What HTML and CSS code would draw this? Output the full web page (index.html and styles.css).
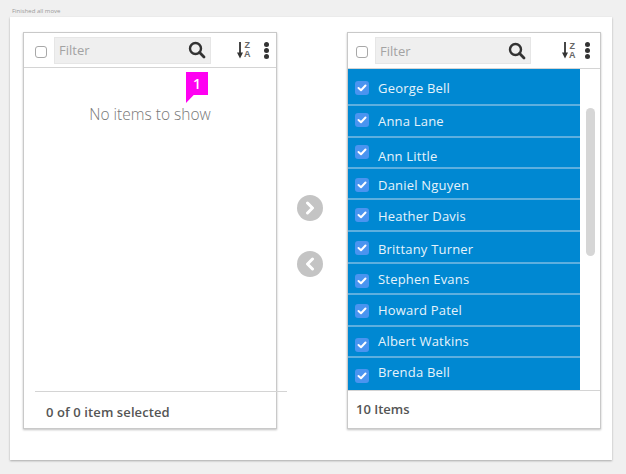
FILE: index.html
```html
<!DOCTYPE html>
<html>
  <head>
    <meta charset="UTF-8" />
    <meta name="viewport" content="width=device-width, initial-scale=1.0" />
    <title>Dual list</title>
    <link rel="stylesheet" href="styles.css">
  </head>
  <body>
    <div class="caption">Finished all move</div>
    <div class="card">
      <!-- source list -->
      <div class="panel panel-left">
        <div class="panel-head">
          <span class="box"></span>
          <div class="filter">
            <span>Filter</span>
            <svg class="search" width="18" height="18" viewBox="0 0 18 18"><circle cx="7.5" cy="7.5" r="5.5" fill="none" stroke="#333" stroke-width="2.4"/><line x1="11.6" y1="11.6" x2="16" y2="16" stroke="#333" stroke-width="2.8" stroke-linecap="round"/></svg>
          </div>
          <div class="sort">
            <svg width="6" height="17" viewBox="0 0 6 17"><path d="M3 0V13" stroke="#333" stroke-width="1.8"/><path d="M0 10.5H6L3 16.5Z" fill="#333"/></svg>
            <div class="sort-letters"><span>Z</span><span>A</span></div>
          </div>
          <div class="kebab"><i></i><i></i><i></i></div>
        </div>
        <div class="empty">
          <div class="badge">1</div>
          <div class="empty-text">No items to show</div>
        </div>
        <div class="panel-foot">0 of 0 item selected</div>
      </div>

      <!-- move buttons -->
      <div class="moves">
        <div class="move">
          <svg width="12" height="14" viewBox="0 0 12 14"><path d="M3.5 2L8.5 7L3.5 12" fill="none" stroke="#fff" stroke-width="3" stroke-linecap="round" stroke-linejoin="round"/></svg>
        </div>
        <div class="move">
          <svg width="12" height="14" viewBox="0 0 12 14"><path d="M8.5 2L3.5 7L8.5 12" fill="none" stroke="#fff" stroke-width="3" stroke-linecap="round" stroke-linejoin="round"/></svg>
        </div>
      </div>

      <!-- target list -->
      <div class="panel panel-right">
        <div class="panel-head">
          <span class="box"></span>
          <div class="filter">
            <span>Filter</span>
            <svg class="search" width="18" height="18" viewBox="0 0 18 18"><circle cx="7.5" cy="7.5" r="5.5" fill="none" stroke="#333" stroke-width="2.4"/><line x1="11.6" y1="11.6" x2="16" y2="16" stroke="#333" stroke-width="2.8" stroke-linecap="round"/></svg>
          </div>
          <div class="sort">
            <svg width="6" height="17" viewBox="0 0 6 17"><path d="M3 0V13" stroke="#333" stroke-width="1.8"/><path d="M0 10.5H6L3 16.5Z" fill="#333"/></svg>
            <div class="sort-letters"><span>Z</span><span>A</span></div>
          </div>
          <div class="kebab"><i></i><i></i><i></i></div>
        </div>
        <div class="list-wrap">
          <ul class="list">
            <li class="row"><span class="check"><svg width="10" height="8" viewBox="0 0 10 8"><path d="M1.5 4L4 6.2L8.5 1.5" fill="none" stroke="#fff" stroke-width="2" stroke-linecap="round" stroke-linejoin="round"/></svg></span><span class="name">George Bell</span></li>
            <li class="row"><span class="check"><svg width="10" height="8" viewBox="0 0 10 8"><path d="M1.5 4L4 6.2L8.5 1.5" fill="none" stroke="#fff" stroke-width="2" stroke-linecap="round" stroke-linejoin="round"/></svg></span><span class="name">Anna Lane</span></li>
            <li class="row"><span class="check"><svg width="10" height="8" viewBox="0 0 10 8"><path d="M1.5 4L4 6.2L8.5 1.5" fill="none" stroke="#fff" stroke-width="2" stroke-linecap="round" stroke-linejoin="round"/></svg></span><span class="name">Ann Little</span></li>
            <li class="row"><span class="check"><svg width="10" height="8" viewBox="0 0 10 8"><path d="M1.5 4L4 6.2L8.5 1.5" fill="none" stroke="#fff" stroke-width="2" stroke-linecap="round" stroke-linejoin="round"/></svg></span><span class="name">Daniel Nguyen</span></li>
            <li class="row"><span class="check"><svg width="10" height="8" viewBox="0 0 10 8"><path d="M1.5 4L4 6.2L8.5 1.5" fill="none" stroke="#fff" stroke-width="2" stroke-linecap="round" stroke-linejoin="round"/></svg></span><span class="name">Heather Davis</span></li>
            <li class="row"><span class="check"><svg width="10" height="8" viewBox="0 0 10 8"><path d="M1.5 4L4 6.2L8.5 1.5" fill="none" stroke="#fff" stroke-width="2" stroke-linecap="round" stroke-linejoin="round"/></svg></span><span class="name">Brittany Turner</span></li>
            <li class="row"><span class="check"><svg width="10" height="8" viewBox="0 0 10 8"><path d="M1.5 4L4 6.2L8.5 1.5" fill="none" stroke="#fff" stroke-width="2" stroke-linecap="round" stroke-linejoin="round"/></svg></span><span class="name">Stephen Evans</span></li>
            <li class="row"><span class="check"><svg width="10" height="8" viewBox="0 0 10 8"><path d="M1.5 4L4 6.2L8.5 1.5" fill="none" stroke="#fff" stroke-width="2" stroke-linecap="round" stroke-linejoin="round"/></svg></span><span class="name">Howard Patel</span></li>
            <li class="row"><span class="check"><svg width="10" height="8" viewBox="0 0 10 8"><path d="M1.5 4L4 6.2L8.5 1.5" fill="none" stroke="#fff" stroke-width="2" stroke-linecap="round" stroke-linejoin="round"/></svg></span><span class="name">Albert Watkins</span></li>
            <li class="row"><span class="check"><svg width="10" height="8" viewBox="0 0 10 8"><path d="M1.5 4L4 6.2L8.5 1.5" fill="none" stroke="#fff" stroke-width="2" stroke-linecap="round" stroke-linejoin="round"/></svg></span><span class="name">Brenda Bell</span></li>
          </ul>
          <div class="scroll-track"><div class="scroll-thumb"></div></div>
        </div>
        <div class="panel-foot">10 Items</div>
      </div>
    </div>
  </body>
</html>
```

FILE: styles.css
```css
html, body {
  margin: 0;
  height: 474px;
  overflow: hidden;
}
body {
  background: #f0f0f0;
  font-family: "Open Sans", "Liberation Sans", sans-serif;
  color: #555;
  padding: 0 14px 0 10px;
  box-sizing: border-box;
}
.caption {
  height: 17px;
  padding: 8px 0 0 2px;
  box-sizing: border-box;
  font-size: 6px;
  line-height: 6px;
  color: #999;
}
.card {
  height: 443px;
  background: #fff;
  box-shadow: 0 1px 2px rgba(0, 0, 0, 0.3);
  padding: 15px 11px 0 13px;
  box-sizing: border-box;
  display: flex;
}
.panel {
  width: 254px;
  height: 397px;
  box-sizing: border-box;
  border: 1px solid #c9c9c9;
  box-shadow: 0 1px 2px rgba(0, 0, 0, 0.25);
  display: flex;
  flex-direction: column;
}
.panel-head {
  height: 36px;
  flex: none;
  box-sizing: border-box;
  border-bottom: 1px solid #d4d4d4;
  display: flex;
  align-items: center;
  padding: 4px 0 4px 11px;
}
.box {
  width: 10px;
  height: 10px;
  border: 1px solid #a8a8a8;
  border-radius: 3px;
  margin: 3px 7px 0 0;
}
.filter {
  width: 157px;
  height: 27px;
  box-sizing: border-box;
  background: #efefef;
  border: 1px solid #e6e6e6;
  padding: 0 0 0 4px;
  display: flex;
  align-items: center;
  justify-content: space-between;
  font-size: 13px;
  color: #a3a3a3;
}
.search {
  margin-right: 4px;
}
.sort {
  display: flex;
  align-items: center;
  gap: 1px;
  margin-left: 26px;
}
.sort-letters {
  display: flex;
  flex-direction: column;
  align-items: center;
  font-family: "Liberation Sans", sans-serif;
  font-size: 9px;
  line-height: 9px;
  font-weight: bold;
  color: #666;
}
.kebab {
  display: flex;
  flex-direction: column;
  gap: 1px;
  margin-left: 13px;
}
.kebab i {
  width: 5px;
  height: 5px;
  border-radius: 50%;
  background: #333;
}
.panel-left .panel-head {
  height: 35px;
}
.panel-right .panel-head {
  padding-left: 8px;
}
.panel-right .filter {
  width: 156px;
}
.panel-right .sort {
  margin-left: 31px;
}
.panel-right .kebab {
  margin-left: 9px;
}
.empty {
  flex: 1;
  position: relative;
  display: flex;
  justify-content: center;
  padding-top: 35px;
}
.empty-text {
  font-size: 15.5px;
  font-weight: 300;
  line-height: 22px;
  color: #777;
}
.badge {
  position: absolute;
  left: 162px;
  top: 4px;
  width: 22px;
  height: 31px;
  background: #ff00f2;
  clip-path: polygon(0 0, 100% 0, 100% 74%, 35% 74%, 0 100%);
  color: #fff;
  font-size: 14px;
  font-weight: 600;
  line-height: 24px;
  text-align: center;
}
.panel-foot {
  height: 38px;
  flex: none;
  box-sizing: border-box;
  border-top: 1px solid #d4d4d4;
  padding: 0 0 1px 8px;
  display: flex;
  align-items: center;
  font-size: 13px;
  font-weight: 600;
  color: #555;
}
.panel-left .panel-foot {
  height: 37px;
  width: 252px;
  margin-left: 11px;
  padding: 3px 0 0 11px;
  letter-spacing: 0.1px;
}
.moves {
  width: 70px;
  flex: none;
  display: flex;
  flex-direction: column;
  align-items: center;
  gap: 30px;
  padding: 163px 4px 0 0;
  box-sizing: border-box;
}
.move {
  width: 26px;
  height: 26px;
  border-radius: 50%;
  background: #c4c4c4;
  display: flex;
  align-items: center;
  justify-content: center;
}
.list-wrap {
  flex: 1;
  display: flex;
  min-height: 0;
}
.list {
  list-style: none;
  margin: 0;
  padding: 0;
  width: 232px;
  flex: none;
}
.row {
  height: 31px;
  box-sizing: border-box;
  background: #0088d2;
  border-bottom: 2px solid #5dafdf;
  display: flex;
  align-items: center;
  padding: 0 0 0 7px;
  color: #e6f3fb;
  font-size: 13px;
  letter-spacing: 0.2px;
}
.check {
  width: 14px;
  height: 14px;
  background: #4a94f0;
  border-radius: 3px;
  display: flex;
  align-items: center;
  justify-content: center;
  margin: var(--check-y, 0) 9px 0 0;
}
.name {
  margin-top: var(--name-y, 0);
}
/* the rows are not quite even: checkbox and name sit a little off centre */
.row:nth-child(1) { height: 37px; --check-y: 2px; --name-y: 2px; }
.row:nth-child(2) { height: 32px; --check-y: -2px; }
.row:nth-child(3) { --check-y: -2px; --name-y: 6px; }
.row:nth-child(4) { --check-y: 2px; --name-y: 2px; }
.row:nth-child(5) { height: 32px; --name-y: 1px; }
.row:nth-child(6) { height: 32px; --check-y: 2px; --name-y: 4px; }
.row:nth-child(7) { --check-y: 4px; }
.row:nth-child(8) { height: 32px; --check-y: 2px; }
.row:nth-child(9) { --check-y: 6px; --name-y: -2px; }
.row:nth-child(10) { height: 32px; border-bottom: none; --check-y: 4px; --name-y: -4px; }
.scroll-track {
  flex: 1;
  padding: 39px 6px 0 6px;
}
.scroll-thumb {
  height: 148px;
  width: 9px;
  border-radius: 5px;
  background: #d6d6d6;
}
```
